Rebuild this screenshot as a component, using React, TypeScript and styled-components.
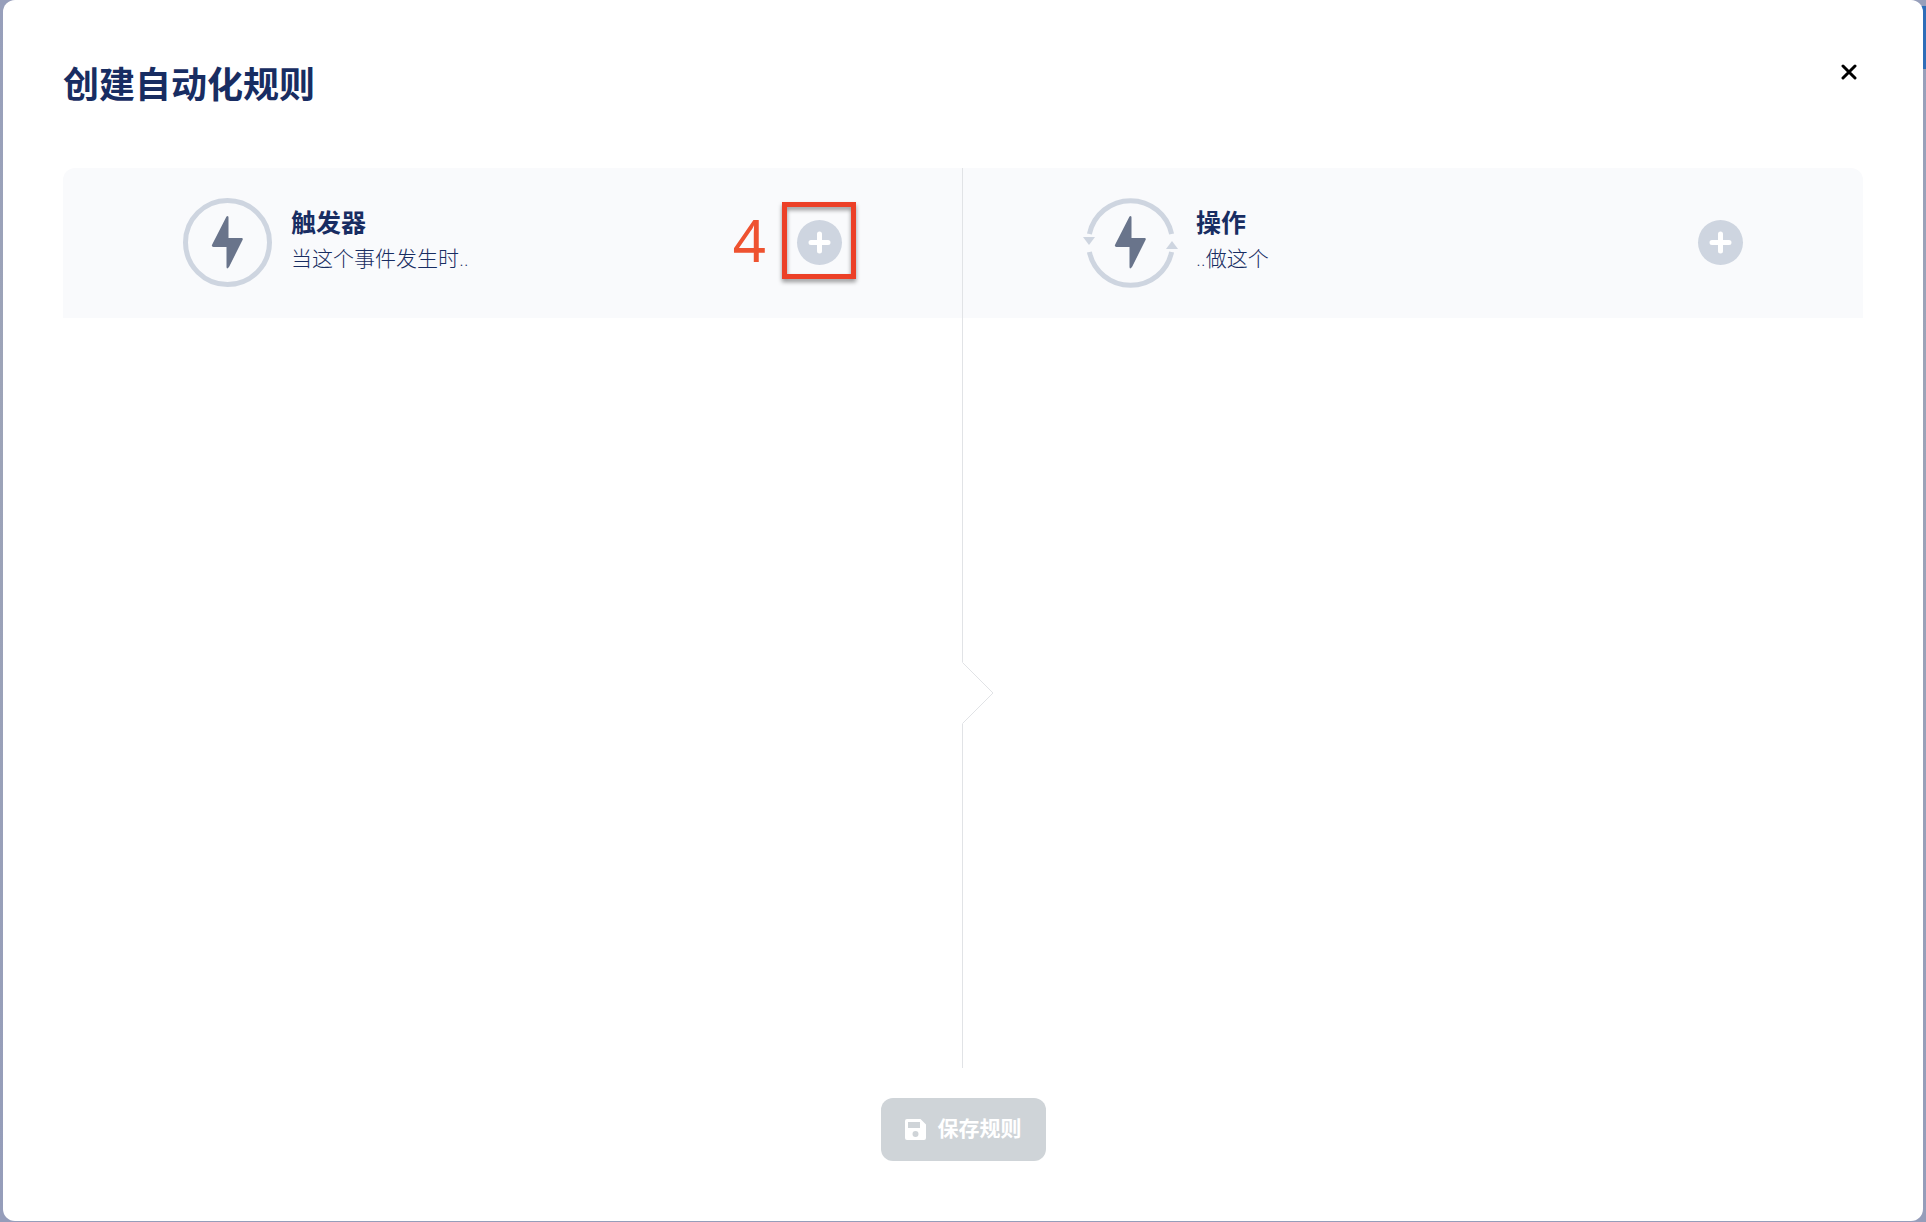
import React from "react";
import styled, { createGlobalStyle } from "styled-components";

const GlobalStyle = createGlobalStyle`
  * { box-sizing: border-box; }
  body {
    margin: 0;
    font-family: "Noto Sans", "Noto Sans CJK SC", sans-serif;
    color: #182d62;
  }
`;

const Backdrop = styled.div`
  position: relative;
  display: flex;
  min-height: 100vh;
  padding: 0 3px 1px;
  background: linear-gradient(#979fbb, #9da4b8 30%, #959dba);
`;

const PageAccent = styled.div`
  position: absolute;
  top: 6px;
  right: 0;
  width: 6px;
  height: 63px;
  background: #2f6db8;
`;

const Dialog = styled.section`
  position: relative;
  flex: 1;
  display: flex;
  flex-direction: column;
  padding: 60px;
  border-radius: 12px;
  background: #fff;
`;

const DialogHeader = styled.header`
  display: flex;
  justify-content: space-between;
  align-items: flex-start;
  height: 108px;
`;

const Title = styled.h1`
  margin: 0;
  font-size: 36px;
  line-height: 50px;
  font-weight: 700;
`;

const CloseButton = styled.button`
  display: flex;
  padding: 4px 6px;
  border: 0;
  background: none;
  color: #000;
  cursor: pointer;
`;

const Columns = styled.div`
  flex: 1;
  display: grid;
  grid-template-columns: 1fr 1fr;
`;

const Column = styled.section<{ $divided?: boolean }>`
  display: flex;
  flex-direction: column;
  border-right: ${(p) => (p.$divided ? "1px solid #e1e3e6" : "0")};
`;

const ColumnHeader = styled.header<{ $corner: "left" | "right" }>`
  display: flex;
  align-items: center;
  gap: 18px;
  height: 150px;
  padding: 30px 120px 31px;
  background: #f9fafc;
  border-radius: ${(p) => (p.$corner === "left" ? "12px 0 0 0" : "0 12px 0 0")};
`;

const HeaderText = styled.div`
  flex: 1;
  padding-bottom: 5px;
`;

const ColumnTitle = styled.h2`
  margin: 0;
  font-size: 25px;
  line-height: 36px;
  font-weight: 700;
`;

const ColumnHint = styled.p`
  margin: 0;
  font-size: 21px;
  line-height: 36px;
  font-weight: 200;
`;

const ColumnBody = styled.div`
  position: relative;
  flex: 1;
`;

const ArrowNotch = styled.svg`
  position: absolute;
  top: calc(50% - 31px);
  right: -32px;
  z-index: 1;
`;

const AddWrap = styled.div`
  position: relative;
  display: flex;
`;

const AddButton = styled.button`
  display: flex;
  align-items: center;
  justify-content: center;
  width: 45px;
  height: 45px;
  padding: 0;
  border: 0;
  border-radius: 50%;
  background: #ced5e0;
  color: #fff;
  cursor: pointer;
`;

const StepFrame = styled.div`
  position: absolute;
  inset: -18px -14px -14px -15px;
  border: 5px solid #ec4027;
  filter: drop-shadow(0 3px 2px rgba(0, 0, 0, 0.4));
  pointer-events: none;
`;

const StepNumber = styled.span`
  position: absolute;
  right: 76px;
  top: -20px;
  font-family: "Noto Sans", sans-serif;
  font-size: 58px;
  line-height: 80px;
  color: #ee5230;
  pointer-events: none;
`;

const DialogFooter = styled.footer`
  display: flex;
  justify-content: center;
  padding-top: 30px;
`;

const SaveButton = styled.button`
  display: flex;
  align-items: center;
  gap: 12px;
  height: 63px;
  padding: 0 24px;
  border: 0;
  border-radius: 12px;
  background: #cfd4d8;
  color: #fff;
  font-family: inherit;
  font-size: 21px;
  font-weight: 700;
`;

const SaveLabel = styled.span`
  padding-bottom: 5px;
`;

const BOLT = "M43.5 18.5 Q45.5 17 45.5 19.5 V40 H58.5 Q60.5 40 59.5 42 L46 69 Q43.5 72 43.5 68.5 V49 H30.5 Q28 49 29.2 46.5 Z";

const TriggerIcon = () => (
  <svg width="90" height="89" viewBox="0 0 90 89" aria-hidden="true">
    <circle cx="44.5" cy="44.5" r="42" fill="none" stroke="#ced5e0" strokeWidth="5" />
    <path d={BOLT} fill="#69748b" />
  </svg>
);

const ActionIcon = () => (
  <svg width="95" height="89" viewBox="0 0 95 89" overflow="visible" aria-hidden="true">
    <g fill="none" stroke="#ced5e0" strokeWidth="5">
      <path d="M6.4 36 A42 42 0 0 1 88.6 36" />
      <path d="M6.4 54 A42 42 0 0 0 88.6 54" />
    </g>
    <path d="M0 39 H12 L6 47 Z M83 51 H95 L89 43 Z" fill="#ced5e0" />
    <path d={BOLT} fill="#69748b" transform="translate(3 0)" />
  </svg>
);

const PlusIcon = () => (
  <svg width="23" height="23" viewBox="0 0 23 23" aria-hidden="true">
    <path d="M11.5 3 V20 M3 11.5 H20" stroke="currentColor" strokeWidth="5" strokeLinecap="round" />
  </svg>
);

const CloseIcon = () => (
  <svg width="16" height="16" viewBox="0 0 16 16" aria-hidden="true">
    <path d="M2 2 L14 14 M14 2 L2 14" stroke="currentColor" strokeWidth="3" strokeLinecap="round" />
  </svg>
);

const SaveIcon = () => (
  <svg width="21" height="21" viewBox="0 0 21 21" aria-hidden="true">
    <path
      fill="currentColor"
      fillRule="evenodd"
      d="M2 0 H15.5 L21 5.5 V19 Q21 21 19 21 H2 Q0 21 0 19 V2 Q0 0 2 0 Z M3 3 V9 H15 V3 Z M10.5 12 A3 3 0 1 0 10.5 18 A3 3 0 1 0 10.5 12 Z"
    />
  </svg>
);

export default function App() {
  return (
    <>
      <GlobalStyle />
      <Backdrop>
        <PageAccent />
        <Dialog role="dialog" aria-labelledby="dialog-title">
          <DialogHeader>
            <Title id="dialog-title">创建自动化规则</Title>
            <CloseButton type="button" aria-label="关闭">
              <CloseIcon />
            </CloseButton>
          </DialogHeader>
          <Columns>
            <Column $divided>
              <ColumnHeader $corner="left">
                <TriggerIcon />
                <HeaderText>
                  <ColumnTitle>触发器</ColumnTitle>
                  <ColumnHint>当这个事件发生时..</ColumnHint>
                </HeaderText>
                <AddWrap>
                  <AddButton type="button" aria-label="添加触发器">
                    <PlusIcon />
                  </AddButton>
                  <StepFrame />
                  <StepNumber>4</StepNumber>
                </AddWrap>
              </ColumnHeader>
              <ColumnBody>
                <ArrowNotch width="32" height="62" viewBox="0 0 32 62" aria-hidden="true">
                  <path d="M0 0 L1 0.5 L31 31 L1 61.5 L0 62 Z" fill="#fff" />
                  <path d="M0.5 0.5 L31 31 L0.5 61.5" fill="none" stroke="#e1e3e6" />
                </ArrowNotch>
              </ColumnBody>
            </Column>
            <Column>
              <ColumnHeader $corner="right">
                <ActionIcon />
                <HeaderText>
                  <ColumnTitle>操作</ColumnTitle>
                  <ColumnHint>..做这个</ColumnHint>
                </HeaderText>
                <AddWrap>
                  <AddButton type="button" aria-label="添加操作">
                    <PlusIcon />
                  </AddButton>
                </AddWrap>
              </ColumnHeader>
            </Column>
          </Columns>
          <DialogFooter>
            <SaveButton type="button">
              <SaveIcon />
              <SaveLabel>保存规则</SaveLabel>
            </SaveButton>
          </DialogFooter>
        </Dialog>
      </Backdrop>
    </>
  );
}
